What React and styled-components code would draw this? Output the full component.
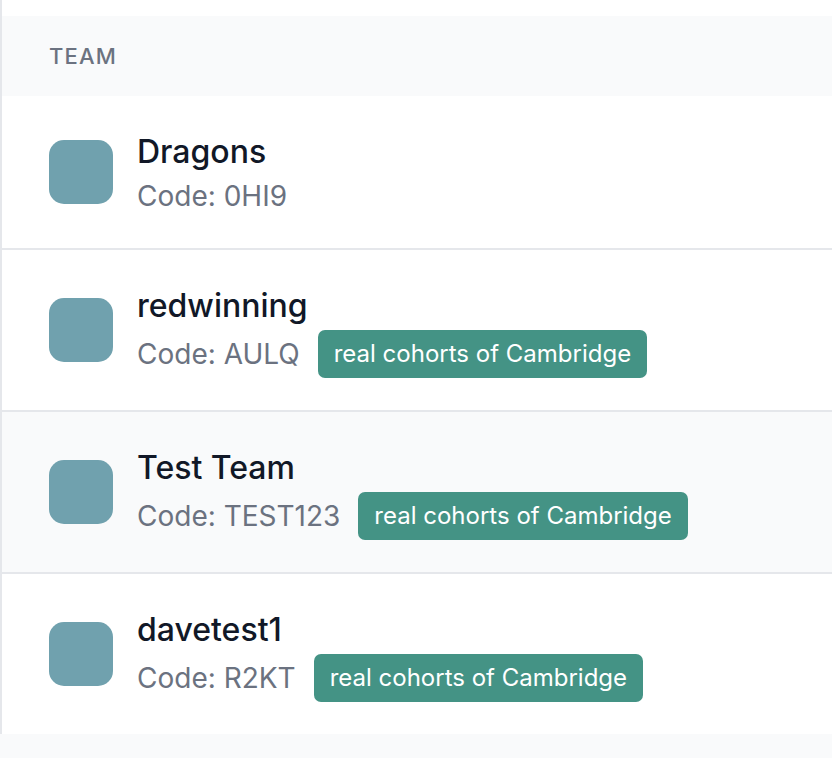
import React from "react";
import styled, { createGlobalStyle } from "styled-components";

const GlobalStyle = createGlobalStyle`
  html, body { margin: 0; padding: 0; background: #f9fafb; }
  body { font-family: Inter, "Noto Sans", sans-serif; -webkit-font-smoothing: antialiased; }
  * { box-sizing: border-box; }
`;

const Card = styled.div`
  width: 860px;
  background: #ffffff;
  padding-top: 16px;
  border-left: 2px solid #e5e7eb;
  box-shadow: 0 2px 5px rgba(0, 0, 0, 0.09), 0 1px 2px rgba(0, 0, 0, 0.06);
`;

const HeaderRow = styled.div`
  height: 80px;
  display: flex;
  align-items: center;
  padding: 0 47px;
  background: #f9fafb;
`;

const HeaderCell = styled.span`
  font-size: 22px;
  font-weight: 500;
  letter-spacing: 1.2px;
  text-transform: uppercase;
  color: #6b7280;
`;

const Row = styled.div`
  display: flex;
  align-items: center;
  gap: 24px;
  padding: 32px 47px;
  background: ${(p) => (p.$hover ? "#f9fafb" : "#ffffff")};
  border-top: ${(p) => (p.$first ? "none" : "2px solid #e5e7eb")};
`;

const Avatar = styled.div`
  width: 64px;
  height: 64px;
  border-radius: 15px;
  background: #70a1ae;
  flex-shrink: 0;
`;

const Info = styled.div`
  display: flex;
  flex-direction: column;
`;

const Name = styled.div`
  font-size: 32px;
  line-height: 48px;
  font-weight: 500;
  color: #111827;
`;

const CodeLine = styled.div`
  display: flex;
  align-items: center;
  gap: 18px;
  min-height: ${(p) => (p.$withBadge ? "48px" : "40px")};
`;

const Code = styled.span`
  font-size: 28px;
  line-height: 40px;
  color: #6b7280;
`;

const Badge = styled.span`
  display: inline-flex;
  align-items: center;
  height: 48px;
  padding: 0 16px;
  border-radius: 7px;
  background: #449385;
  color: #ffffff;
  font-size: 24px;
  line-height: 32px;
`;

const teams = [
  { name: "Dragons", code: "0HI9" },
  { name: "redwinning", code: "AULQ", badge: "real cohorts of Cambridge" },
  { name: "Test Team", code: "TEST123", badge: "real cohorts of Cambridge", hover: true },
  { name: "davetest1", code: "R2KT", badge: "real cohorts of Cambridge" },
];

export default function App() {
  return (
    <>
      <GlobalStyle />
      <Card>
        <HeaderRow>
          <HeaderCell>Team</HeaderCell>
        </HeaderRow>
        {teams.map((t, i) => (
          <Row key={t.name} $first={i === 0} $hover={t.hover}>
            <Avatar />
            <Info>
              <Name>{t.name}</Name>
              <CodeLine $withBadge={!!t.badge}>
                <Code>Code: {t.code}</Code>
                {t.badge && <Badge>{t.badge}</Badge>}
              </CodeLine>
            </Info>
          </Row>
        ))}
      </Card>
    </>
  );
}
